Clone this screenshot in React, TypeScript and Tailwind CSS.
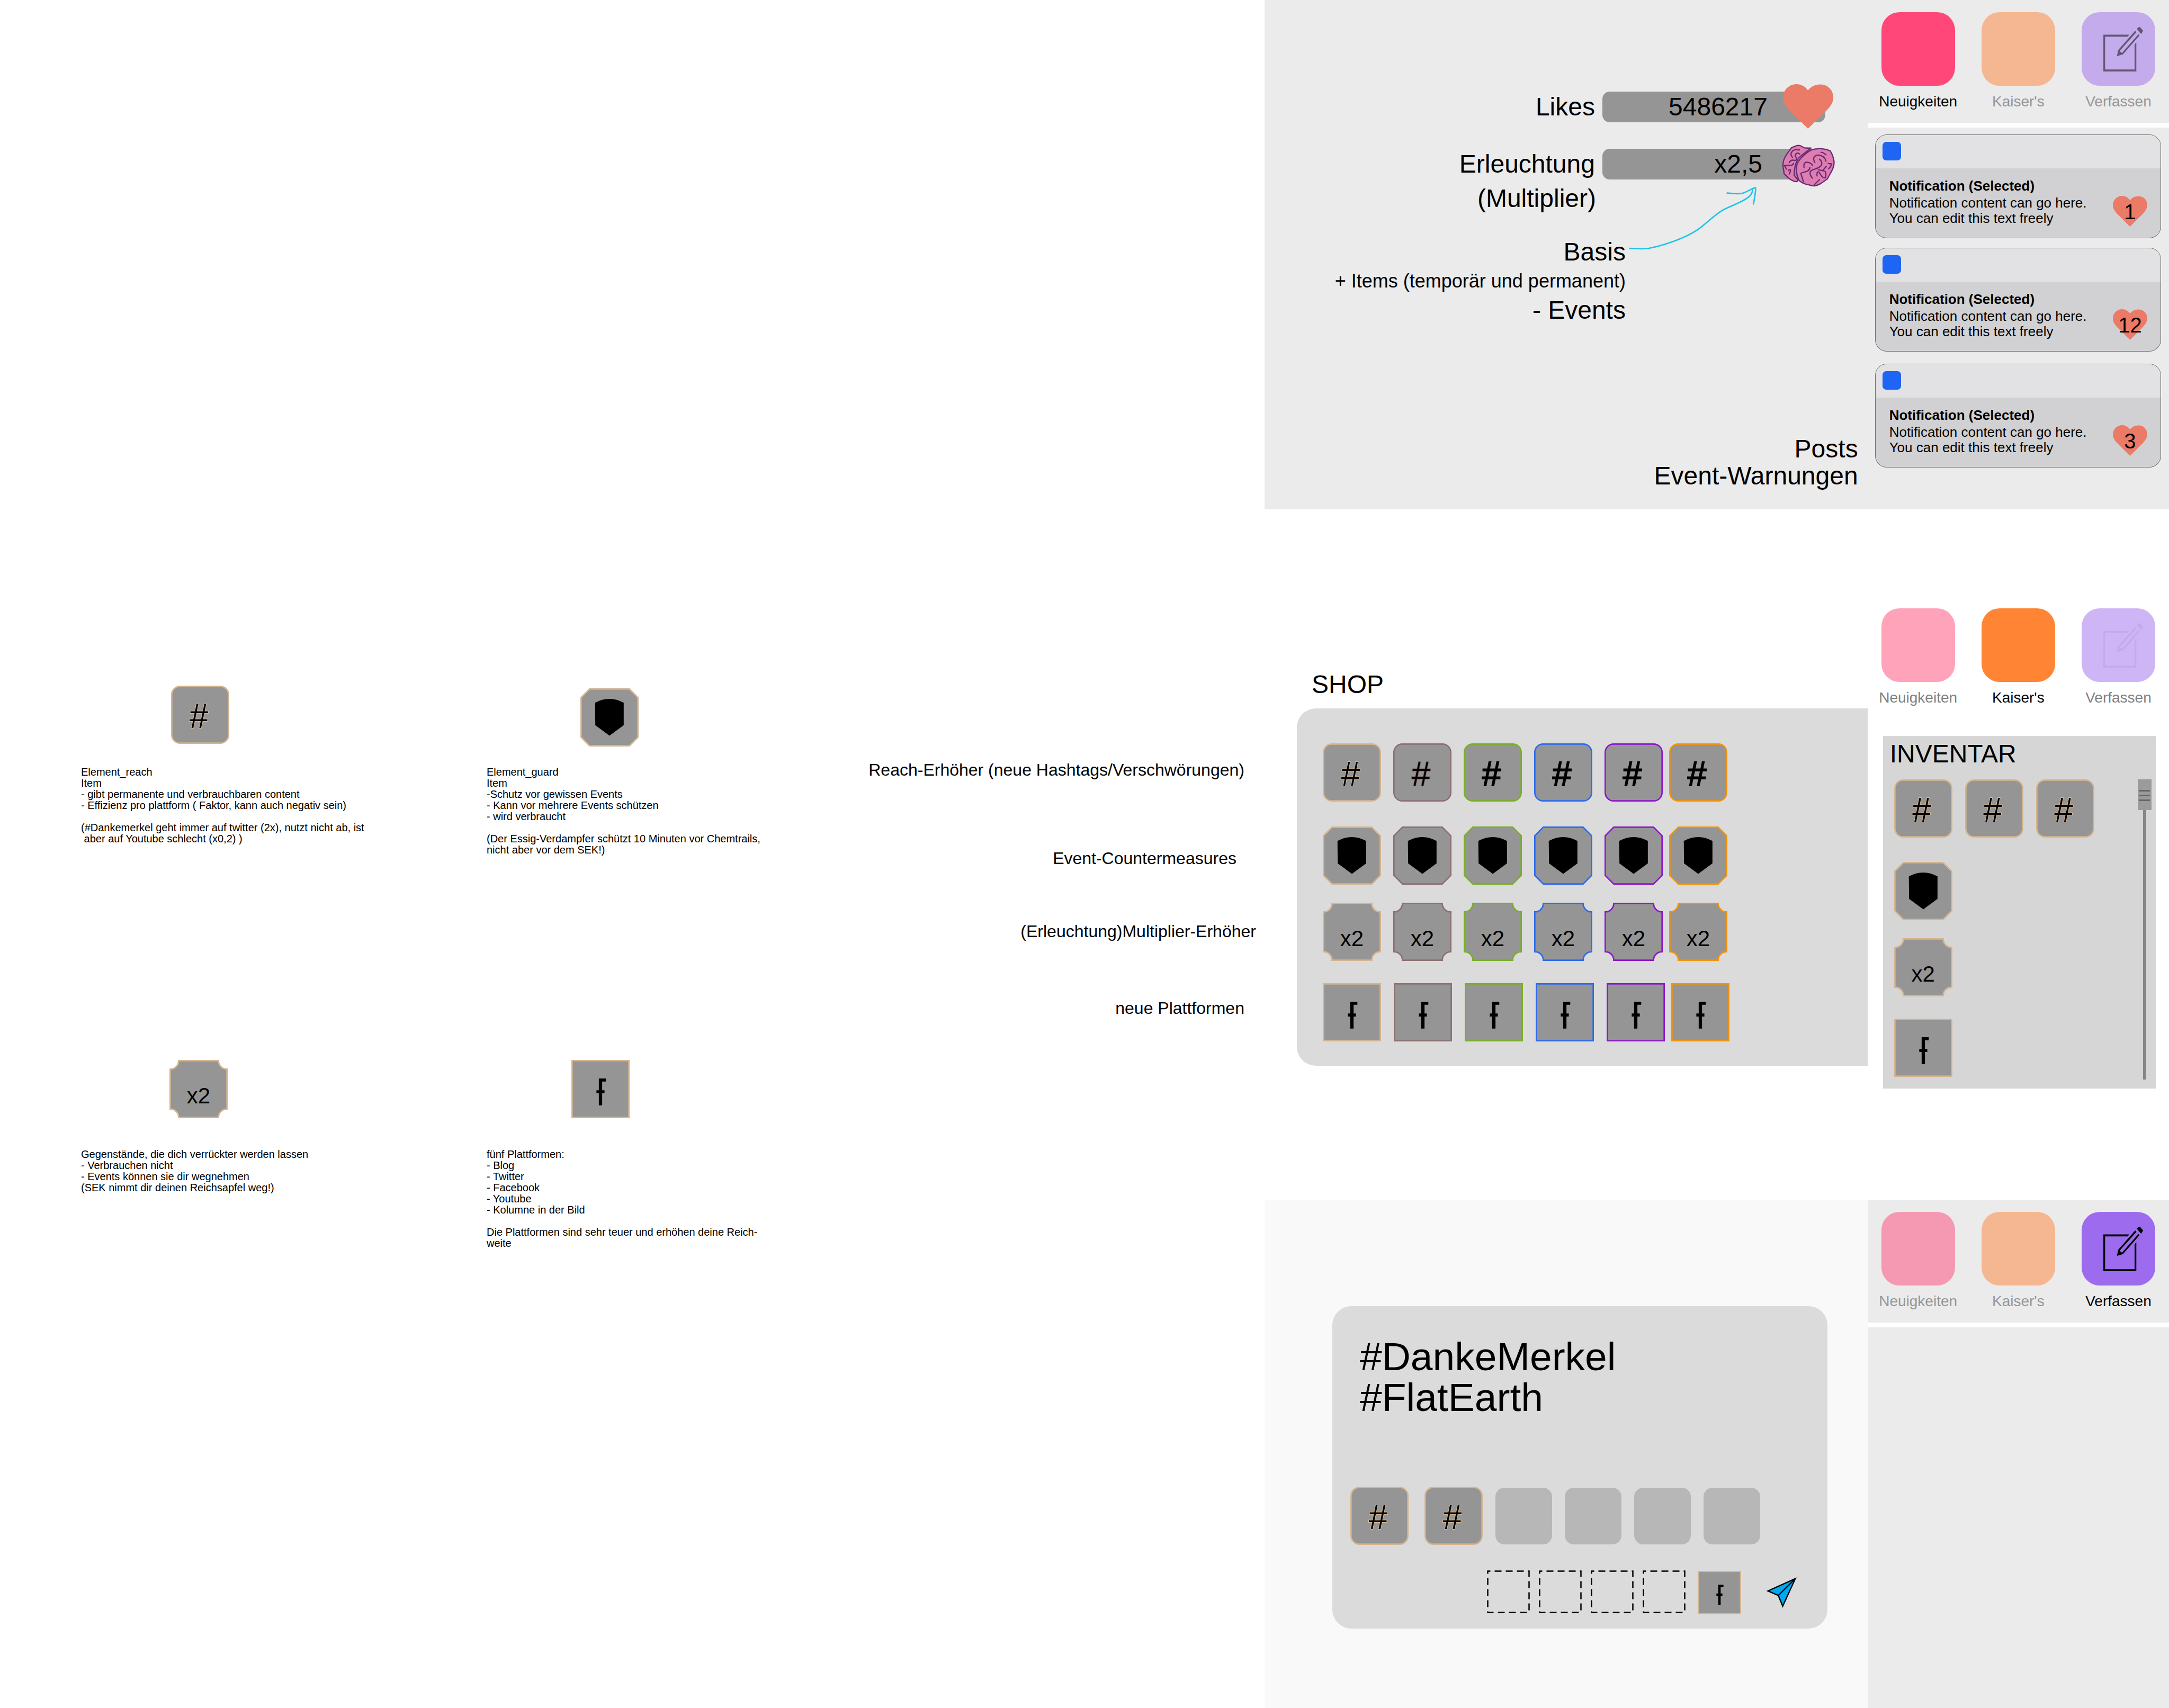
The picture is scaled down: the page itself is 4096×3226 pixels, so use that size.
import React from "react";

type Kind = "reach" | "guard" | "multiplier" | "platform";

type Tone = { stroke: string; glyph: string };

const tones: Tone[] = [
  { stroke: "#d5b58f", glyph: "[-webkit-text-stroke:2px_#d5b58f]" },
  { stroke: "#8b7072", glyph: "[-webkit-text-stroke:2px_#7d6062]" },
  { stroke: "#79b023", glyph: "[-webkit-text-stroke:2px_#000000]" },
  { stroke: "#2c69ee", glyph: "[-webkit-text-stroke:2px_#000000]" },
  { stroke: "#8d15ca", glyph: "[-webkit-text-stroke:2px_#000000]" },
  { stroke: "#f69305", glyph: "[-webkit-text-stroke:2px_#000000]" },
];

const kindNames: Record<Kind, string> = {
  reach: "Reach-Erhöher",
  guard: "Event-Countermeasure",
  multiplier: "Multiplier-Erhöher",
  platform: "Plattform",
};

function TileShape({ kind, stroke, weight }: { kind: Kind; stroke: string; weight: number }) {
  const paint = { fill: "#959595", stroke, strokeWidth: weight };
  return (
    <svg viewBox="0 0 123 123" className="size-full [grid-area:1/1]" aria-hidden="true">
      {kind === "reach" && <rect x="1.5" y="1.5" width="120" height="120" rx="17.5" {...paint} />}
      {kind === "guard" && (
        <path d="M19.5 1.5H103.5L121.5 19.5V103.5L103.5 121.5H19.5L1.5 103.5V19.5Z" {...paint} />
      )}
      {kind === "multiplier" && (
        <path
          d="M19.5 1.5H103.5A18 18 0 0 0 121.5 19.5V103.5A18 18 0 0 0 103.5 121.5H19.5A18 18 0 0 0 1.5 103.5V19.5A18 18 0 0 0 19.5 1.5Z"
          {...paint}
        />
      )}
      {kind === "platform" && <rect x="1.5" y="1.5" width="120" height="120" {...paint} />}
      {kind === "guard" && <path d="M31 30.5Q61.5 14 91.5 30.5V78L61.5 100L31.5 78Z" fill="#000" />}
      {kind === "platform" && (
        <path d="M58 39H73V45.5H65V64H70V70.5H65V96H58V70.5H53V64H58Z" fill="#000" />
      )}
    </svg>
  );
}

function Tile({ kind, tone = 0, small = false }: { kind: Kind; tone?: number; small?: boolean }) {
  const t = tones[tone];
  return (
    <button
      type="button"
      aria-label={kindNames[kind]}
      className={small ? "grid size-[82px] shrink-0" : "grid size-[110px] shrink-0"}
    >
      <TileShape kind={kind} stroke={t.stroke} weight={small ? 4 : 3} />
      {kind === "reach" && (
        <span className="grid place-items-center pt-[6px] pr-[5px] [grid-area:1/1]">
          <span className={`text-[64px] leading-none [paint-order:stroke_fill] ${t.glyph}`}>#</span>
        </span>
      )}
      {kind === "multiplier" && (
        <span className="grid place-items-center pt-[25px] text-[42px] leading-none [grid-area:1/1]">x2</span>
      )}
    </button>
  );
}

function Heart({ className }: { className: string }) {
  return (
    <svg viewBox="135 87 320 284" preserveAspectRatio="none" className={className} aria-hidden="true">
      <path
        d="M294 127C278 102 250 87 221 87C172 87 135 126 135 174C135 204 155 232 178 256L294 371L405 262C436 232 455 204 455 172C455 124 420 89 371 89C340 89 312 103 294 127Z"
        fill="#eb7a67"
      />
    </svg>
  );
}

function Brain({ className }: { className: string }) {
  return (
    <svg viewBox="125 469 342 274" className={className} aria-hidden="true">
      <g stroke="#6b2a76" strokeWidth="8" strokeLinecap="round" strokeLinejoin="round" fill="none">
        <path
          d="M313 492L292 492L268 490C255 480 235 472 220 476L186 490C170 515 140 545 134 580C128 610 134 625 138 645V658L150 668C170 692 190 706 215 709C232 708 230 704 222 690L204 668C204 630 210 595 226 567C245 538 285 515 313 492Z"
          fill="#dd7db0"
        />
        <path
          d="M437 510C400 493 350 493 320 502C280 520 240 560 224 592C212 630 222 680 237 702C255 718 280 727 300 730C330 742 345 737 375 722L418 692C440 650 465 620 462 580C458 545 450 530 437 510Z"
          fill="#dd7db0"
        />
        <path d="M238 504L215 502C190 505 172 530 193 552M240 530C225 518 208 530 212 545C226 562 220 573 205 571C190 568 178 572 172 586M140 606L170 602C176 608 196 606 200 590M143 608L154 628M166 638C178 624 188 630 172 660" />
        <path d="M268 618C262 584 280 580 300 586C312 590 320 596 323 606M338 586C320 552 335 540 360 537C385 540 405 552 409 577M368 564C388 580 386 602 370 613C345 632 315 628 308 646C303 662 312 672 322 686M264 710L247 655C270 644 302 646 306 618M378 520C390 516 396 526 410 535M424 592L445 594C446 605 438 615 427 626M360 632L388 638C408 640 414 650 406 682C390 690 380 672 365 648C352 640 350 655 352 672M388 638L412 610M368 696C350 715 340 720 332 734" />
      </g>
    </svg>
  );
}

function ComposeIcon({ color }: { color: string }) {
  return (
    <svg viewBox="24 22 467 467" className="size-full" fill={color} aria-hidden="true">
      <path d="M162 165H327L316 177H173V386H360V226L371 214V398H162Z" />
      <path d="M364 140L372 149L269 264L266 270L280 281L384 162L392 169L286 290L248 301L256 262Z" />
      <path d="M374 128L387 116Q391 114 395 118L411 135Q415 140 412 145L401 161Z" />
    </svg>
  );
}

type Tab = { label: string; tile: string; text: string; icon?: string };

function Tabs({ tabs }: { tabs: Tab[] }) {
  return (
    <nav className="flex h-[232px] justify-between px-[26px] pt-[23px]">
      {tabs.map((tab) => (
        <button key={tab.label} type="button" className="flex w-[139px] flex-col items-center gap-3">
          <span className={`size-[139px] shrink-0 rounded-[34px] ${tab.tile}`}>
            {tab.icon && <ComposeIcon color={tab.icon} />}
          </span>
          <span className={`text-[28px] leading-[36px] whitespace-nowrap ${tab.text}`}>{tab.label}</span>
        </button>
      ))}
    </nav>
  );
}

function Note({
  kind,
  article,
  tile,
  children,
}: {
  kind: Kind;
  article: string;
  tile: string;
  children: string;
}) {
  return (
    <article className={`flex flex-col ${article}`}>
      <div className={tile}>
        <Tile kind={kind} />
      </div>
      <p className="text-[20px] leading-[21px] whitespace-pre">{children}</p>
    </article>
  );
}

const reachText = `Element_reach
Item
- gibt permanente und verbrauchbaren content
- Effizienz pro plattform ( Faktor, kann auch negativ sein)

(#Dankemerkel geht immer auf twitter (2x), nutzt nicht ab, ist
 aber auf Youtube schlecht (x0,2) )`;

const guardText = `Element_guard
Item
-Schutz vor gewissen Events
- Kann vor mehrere Events schützen
- wird verbraucht

(Der Essig-Verdampfer schützt 10 Minuten vor Chemtrails,
nicht aber vor dem SEK!)`;

const multiplierText = `Gegenstände, die dich verrückter werden lassen
- Verbrauchen nicht
- Events können sie dir wegnehmen
(SEK nimmt dir deinen Reichsapfel weg!)`;

const platformText = `fünf Plattformen:
- Blog
- Twitter
- Facebook
- Youtube
- Kolumne in der Bild

Die Plattformen sind sehr teuer und erhöhen deine Reich-
weite`;

function Notes() {
  return (
    <div className="flex justify-between pt-[1295px]">
      <div className="grid grid-cols-[766px_auto] content-start gap-y-[386px] pl-[153px]">
        <Note kind="reach" article="gap-[43px]" tile="pl-[170px]">
          {reachText}
        </Note>
        <Note kind="guard" article="gap-[38px] pt-[5px]" tile="pl-[177px]">
          {guardText}
        </Note>
        <Note kind="multiplier" article="gap-[58px]" tile="pl-[167px]">
          {multiplierText}
        </Note>
        <Note kind="platform" article="gap-[58px]" tile="pl-[160px]">
          {platformText}
        </Note>
      </div>
      <div className="flex flex-col items-end pt-[141px] text-[32px] leading-[36px] whitespace-nowrap">
        <p className="pr-[38px]">Reach-Erhöher (neue Hashtags/Verschwörungen)</p>
        <p className="mt-[131px] pr-[53px]">Event-Countermeasures</p>
        <p className="mt-[102px] pr-[16px]">(Erleuchtung)Multiplier-Erhöher</p>
        <p className="mt-[109px] pr-[38px]">neue Plattformen</p>
      </div>
    </div>
  );
}

function Notification({ likes }: { likes: number }) {
  return (
    <article className="h-[196px] overflow-hidden rounded-[22px] border border-[#6a6a6a] bg-[#d1d1d3]">
      <div className="h-[63px] bg-[#e2e2e4] pt-[13px] pl-[13px]">
        <div className="size-[35px] rounded-[7px] bg-[#1d65f2]" />
      </div>
      <div className="flex justify-between pt-[15px] pr-[25px] pl-[26px]">
        <div className="text-[26px] leading-[29px] whitespace-nowrap">
          <h3 className="leading-[36px] font-bold">Notification (Selected)</h3>
          <p>Notification content can go here.</p>
          <p>You can edit this text freely</p>
        </div>
        <div className="mt-[37px] grid h-[58px] w-[65px] place-items-center">
          <Heart className="h-[58px] w-[65px] [grid-area:1/1]" />
          <span className="relative pt-[2px] text-[40px] leading-none [grid-area:1/1]">{likes}</span>
        </div>
      </div>
    </article>
  );
}

function NewsScreen() {
  return (
    <section className="grid min-h-[961px] grid-cols-[2fr_1fr] bg-[#ebebeb]">
      <div className="flex flex-col pt-[173px] text-[48px] leading-[58px] whitespace-nowrap">
        <div className="flex gap-[14px]">
          <span className="w-[624px] text-right">Likes</span>
          <div className="relative h-[58px] w-[421px] rounded-[14px] bg-[#959595] pr-[109px] text-right">
            5486217
            <Heart className="absolute top-[-14px] left-[341px] h-[84px] w-[95px]" />
          </div>
        </div>
        <div className="mt-[50px] flex gap-[14px]">
          <span className="w-[624px] text-right">Erleuchtung</span>
          <div className="relative h-[58px] w-[421px] rounded-[14px] bg-[#959595] pr-[119px] text-right">
            x2,5
            <Brain className="absolute top-[-8px] left-[339px] h-[80px] w-[100px]" />
          </div>
        </div>
        <p className="mt-[7px] w-[626px] text-right">(Multiplier)</p>
        <div className="relative mt-[44px] w-[682px] text-right leading-[55px]">
          <p>Basis</p>
          <p className="text-[36px]">+ Items (temporär und permanent)</p>
          <p>- Events</p>
          <svg
            viewBox="0 0 960 480"
            className="absolute top-[-110px] left-full -ml-[10px] h-[142px] w-[285px]"
            fill="none"
            stroke="#1ec3e8"
            strokeWidth="9"
            strokeLinecap="round"
            strokeLinejoin="round"
            aria-hidden="true"
          >
            <path d="M58 443C95 444 135 449 180 443C260 428 400 385 490 325C540 290 590 238 650 200C700 173 760 155 805 124C830 107 842 88 841 70" />
            <path d="M680 90C720 93 745 97 775 92C805 84 835 60 861 56C864 85 852 130 848 160" />
          </svg>
        </div>
        <div className="mt-auto pr-[18px] pb-[37px] text-right leading-[51px]">
          <p>Posts</p>
          <p>Event-Warnungen</p>
        </div>
      </div>
      <aside>
        <Tabs
          tabs={[
            { label: "Neuigkeiten", tile: "bg-[#ff4879]", text: "text-black" },
            { label: "Kaiser's", tile: "bg-[#f5b791]", text: "text-[#969696]" },
            { label: "Verfassen", tile: "bg-[#c4abeb]", text: "text-[#969696]", icon: "#625675" },
          ]}
        />
        <div className="h-[9px] bg-white" />
        <div className="flex flex-col pt-[13px] pr-[15px] pl-[14px]">
          <Notification likes={1} />
          <div className="h-[18px]" />
          <Notification likes={12} />
          <div className="h-[23px]" />
          <Notification likes={3} />
        </div>
      </aside>
    </section>
  );
}

function ShopRow({ kind, spacing, top }: { kind: Kind; spacing: string; top: string }) {
  return (
    <div className={`flex gap-3 ${top}`}>
      <div className={`flex ${spacing}`}>
        {[0, 1, 2, 3, 4].map((tone) => (
          <Tile key={tone} kind={kind} tone={tone} />
        ))}
      </div>
      <Tile kind={kind} tone={5} />
    </div>
  );
}

function ShopScreen() {
  return (
    <section className="grid min-h-[961px] grid-cols-[2fr_1fr] bg-white">
      <div className="pt-[138px]">
        <h2 className="pl-[89px] text-[48px] leading-[58px]">SHOP</h2>
        <div className="mt-[16px] ml-[61px] rounded-l-[36px] bg-[#dbdbdb] pt-[66px] pb-[46px] pl-[49px]">
          <ShopRow kind="reach" spacing="gap-[23px]" top="mt-0" />
          <ShopRow kind="guard" spacing="gap-[23px]" top="mt-[47px]" />
          <ShopRow kind="multiplier" spacing="gap-[23px]" top="mt-[34px]" />
          <ShopRow kind="platform" spacing="gap-6" top="mt-[42px]" />
        </div>
      </div>
      <aside>
        <Tabs
          tabs={[
            { label: "Neuigkeiten", tile: "bg-[#ffa3bb]", text: "text-[#808080]" },
            { label: "Kaiser's", tile: "bg-[#ff8534]", text: "text-black" },
            { label: "Verfassen", tile: "bg-[#ceb5f6]", text: "text-[#808080]", icon: "#c4abec" },
          ]}
        />
        <div className="mt-[32px] mr-[25px] ml-[29px] bg-[#d6d6d6] pt-[5px]">
          <h2 className="pl-[13px] text-[48px] leading-[58px]">INVENTAR</h2>
          <div className="mt-[19px] flex justify-between pr-[8px] pl-[21px]">
            <div className="pb-[22px]">
              <div className="flex gap-6">
                <Tile kind="reach" />
                <Tile kind="reach" />
                <Tile kind="reach" />
              </div>
              <div className="mt-[46px]">
                <Tile kind="guard" />
              </div>
              <div className="mt-[34px]">
                <Tile kind="multiplier" />
              </div>
              <div className="mt-[42px]">
                <Tile kind="platform" />
              </div>
            </div>
            <div className="flex w-[26px] flex-col items-center pb-[17px]">
              <div className="flex h-[58px] w-full flex-col items-center gap-[6px] bg-[#9b9b9b] pt-[20px]">
                <div className="h-[3px] w-[21px] bg-[#666666]" />
                <div className="h-[3px] w-[21px] bg-[#666666]" />
                <div className="h-[3px] w-[21px] bg-[#666666]" />
              </div>
              <div className="w-[6px] flex-1 bg-[#868686]" />
            </div>
          </div>
        </div>
      </aside>
    </section>
  );
}

function DashedSlot() {
  return (
    <button type="button" aria-label="Freier Plattform-Platz" className="size-[81px]">
      <svg viewBox="0 0 81 81" className="size-full" aria-hidden="true">
        <rect
          x="1.5"
          y="1.5"
          width="78"
          height="78"
          fill="none"
          stroke="#000"
          strokeWidth="2.5"
          strokeDasharray="13 8"
          strokeDashoffset="8"
        />
      </svg>
    </button>
  );
}

function ComposeScreen() {
  return (
    <section className="grid min-h-[960px] grid-cols-[2fr_1fr] bg-[#ebebeb]">
      <div className="bg-[#f9f9f9] pt-[201px] pr-[76px] pl-[128px]">
        <form className="rounded-[36px] bg-[#dbdbdb] pt-[57px] pb-[27px]" onSubmit={(e) => e.preventDefault()}>
          <textarea
            aria-label="Beitrag"
            rows={2}
            defaultValue={"#DankeMerkel\n#FlatEarth"}
            className="block h-[154px] w-full resize-none overflow-hidden px-[52px] text-[75px] leading-[77px] outline-none"
          />
          <div className="mt-[130px] flex items-center gap-6 pl-[34px]">
            <div className="flex gap-[30px]">
              <Tile kind="reach" />
              <Tile kind="reach" />
            </div>
            {[0, 1, 2, 3].map((i) => (
              <button
                key={i}
                type="button"
                aria-label="Freier Hashtag-Platz"
                className="size-[107px] rounded-[17px] bg-[#b7b7b7]"
              />
            ))}
          </div>
          <div className="mt-[48px] flex items-center justify-end pr-[58px]">
            <div className="flex gap-[17px] pr-[23px] pb-[2px]">
              <DashedSlot />
              <DashedSlot />
              <DashedSlot />
              <DashedSlot />
            </div>
            <Tile kind="platform" small />
            <button type="submit" aria-label="Senden" className="ml-[47px] size-[58px]">
              <svg viewBox="508 80 195 195" className="size-full" aria-hidden="true">
                <path
                  d="M694 89L520 167L586 196L614 264ZM586 196L694 89"
                  fill="#00a8f0"
                  stroke="#000"
                  strokeWidth="8"
                />
              </svg>
            </button>
          </div>
        </form>
      </div>
      <aside>
        <Tabs
          tabs={[
            { label: "Neuigkeiten", tile: "bg-[#f599b2]", text: "text-[#969696]" },
            { label: "Kaiser's", tile: "bg-[#f5b791]", text: "text-[#969696]" },
            { label: "Verfassen", tile: "bg-[#9d6cee]", text: "text-black", icon: "#000000" },
          ]}
        />
        <div className="h-[9px] bg-white" />
      </aside>
    </section>
  );
}

export default function App() {
  return (
    <main className="grid min-h-screen grid-cols-[58.3%_41.7%] bg-white font-['Liberation_Sans',Arial,sans-serif] text-black">
      <Notes />
      <div className="flex flex-col">
        <NewsScreen />
        <div className="h-[165px]" />
        <ShopScreen />
        <div className="h-[179px]" />
        <ComposeScreen />
      </div>
    </main>
  );
}
